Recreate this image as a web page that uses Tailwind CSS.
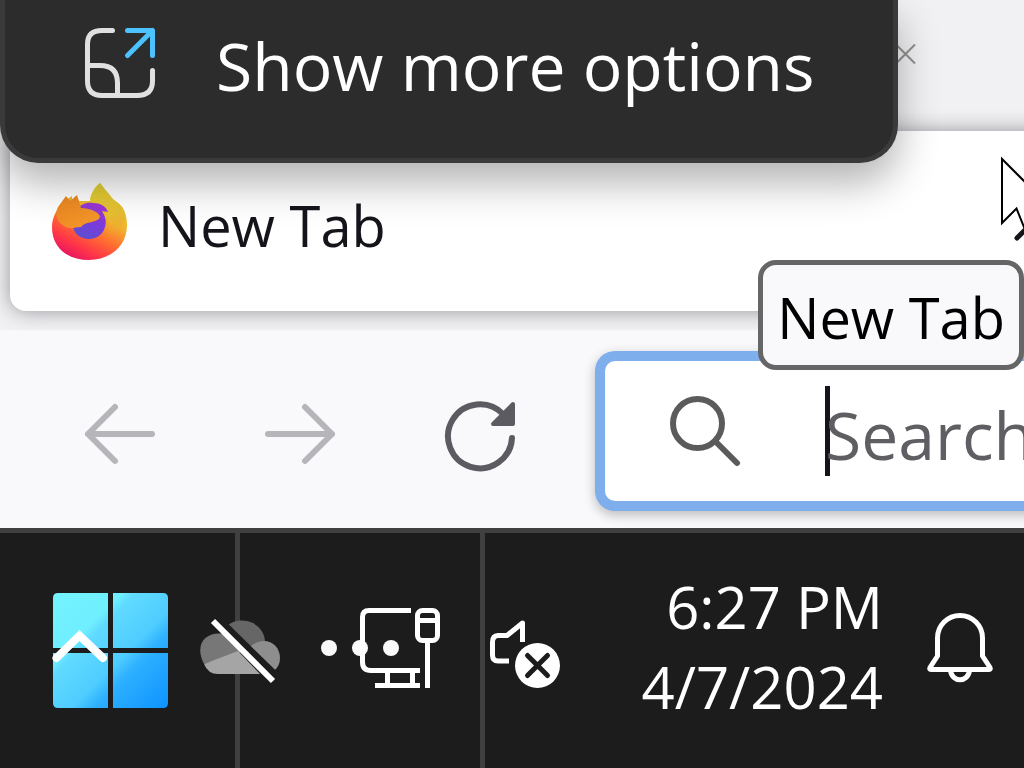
<!DOCTYPE html>
<html lang="en">
<head>
<meta charset="utf-8">
<title>New Tab</title>
<script src="https://cdn.jsdelivr.net/npm/@tailwindcss/browser@4"></script>
</head>
<body class="relative flex min-h-screen flex-col overflow-hidden bg-[#f9f9fb] font-['Open_Sans','Noto_Sans',sans-serif]">

<!-- Vertical tab list -->
<section class="relative flex h-[330px] flex-col bg-[#f1f1f3] pl-[10px]" aria-label="Tabs">
  <div class="flex h-[131px] items-start justify-end pt-[43px] pr-[108px]">
    <button aria-label="Close tab" class="h-[22px] w-[22px]">
      <svg viewBox="0 0 22 22" class="h-full w-full" fill="none" stroke="#8f8f8f" stroke-width="2"><path d="M2 1.500 21 20.500M21 1.500 2 20.500"/></svg>
    </button>
  </div>
  <button class="-mr-[40px] flex h-[180px] items-start gap-[28px] rounded-l-[16px] bg-white pt-[50px] pl-[40px] text-[#15141a] shadow-[0_0_20px_rgba(20,20,30,0.42)]">
    <svg viewBox="0 0 80 80" class="h-[80px] w-[80px]" aria-hidden="true">
      <defs>
        <linearGradient id="flame" x1=".78" y1=".1" x2=".3" y2="1"><stop offset="0" stop-color="#e5d32f"/><stop offset=".35" stop-color="#f0b32d"/><stop offset=".58" stop-color="#ff722f"/><stop offset=".82" stop-color="#ff3548"/><stop offset="1" stop-color="#e8155f"/></linearGradient>
        <linearGradient id="globe" x1=".8" y1="0" x2=".3" y2="1"><stop offset="0" stop-color="#a334d2"/><stop offset=".5" stop-color="#7c3bdc"/><stop offset="1" stop-color="#5b4fd0"/></linearGradient>
        <linearGradient id="fox" x1="0" y1="0" x2="1" y2="1"><stop offset="0" stop-color="#ea851f"/><stop offset="1" stop-color="#f59a2c"/></linearGradient>
        <linearGradient id="mane" x1=".3" y1="0" x2=".5" y2="1"><stop offset="0" stop-color="#e2d032"/><stop offset=".6" stop-color="#e6bf33"/><stop offset="1" stop-color="#f29a30" stop-opacity="0"/></linearGradient>
      </defs>
      <path fill="url(#flame)" d="M50 2c-6 5-9 11-10 18H29l-2-4-5 4 0-5-6 4c-8 7-14 16-14 27 0 22 17 33 37 33s38-13 38-35c0-10-3-17-8-21-4-3-7-5-9-9-3-3-6-7-10-12z"/>
      <path fill="url(#mane)" d="M50 2c-6 5-10 12-10 19 12 0 18 9 19 21 1 10-3 16-3 16 13-4 18-12 19-23 0-7-4-11-8-14-6-4-10-9-17-19z"/>
      <path fill="url(#globe)" d="M26 30c4-7 11-9 17-8 7 0 13 3 15 9l-6-1c3 5 5 10 3 16-2 8-9 12-16 12-10 0-17-7-16-16z"/>
      <path fill="url(#fox)" d="M8 26 16 15 20 20 27 14C29 20 30 24 31 27c8 0 19 4 19 9-1 3-5 4-8 5-6 1-8 2-11 5-8 0-10 4-20-3-5-5-6-11-3-17z"/>
    </svg>
    <span class="text-[56px] leading-[88px]">New Tab</span>
  </button>
</section>

<!-- Navigation toolbar -->
<nav class="flex h-[198px] items-center bg-[#f9f9fb] pl-[75px]" aria-label="Navigation">
  <div class="flex shrink-0 items-center gap-[90px] pt-[20px]">
    <button aria-label="Back" class="h-[90px] w-[90px]">
      <svg viewBox="0 0 90 90" class="h-full w-full" fill="none" stroke="#b6b6ba" stroke-width="6" stroke-linecap="round" stroke-linejoin="round"><path d="M40 13 13 40 40 67M13 40H77"/></svg>
    </button>
    <button aria-label="Forward" class="h-[90px] w-[90px]">
      <svg viewBox="0 0 90 90" class="h-full w-full" fill="none" stroke="#b6b6ba" stroke-width="6" stroke-linecap="round" stroke-linejoin="round"><path d="M50 13 77 40 50 67M13 40H77"/></svg>
    </button>
    <button aria-label="Reload" class="h-[90px] w-[90px]">
      <svg viewBox="0 0 90 90" class="h-full w-full"><path fill="none" stroke="#5b5b61" stroke-width="6" stroke-linecap="round" d="M77 44a32 32 0 1 1-9-24"/><path fill="#5b5b61" stroke="#5b5b61" stroke-width="4" stroke-linejoin="round" d="M78 10V30H58z"/></svg>
    </button>
  </div>
  <label class="mt-[4px] -mr-[40px] ml-[70px] flex h-[160px] min-w-0 flex-1 items-center overflow-hidden rounded-l-[20px] border-[10px] border-r-0 border-[#7eaeeb] bg-white pl-[55px] shadow-[0_4px_12px_rgba(0,0,0,0.25)]">
    <svg viewBox="0 0 90 90" class="h-[90px] w-[90px] shrink-0" fill="none" stroke="#5b5b5b" stroke-width="6" stroke-linecap="round" aria-hidden="true"><circle cx="37.500" cy="37.500" r="24.500"/><path d="M55 55 77 77"/></svg>
    <span class="ml-[75px] h-[90px] w-[5px] shrink-0 bg-[#15141a]"></span>
    <input aria-label="Search" placeholder="Search with Google or enter address" class="-ml-[5px] h-[90px] w-[360px] shrink-0 bg-transparent pt-[7px] text-[66px] text-[#5b5b66] placeholder-[#5f5f63] outline-none">
  </label>
</nav>

<!-- Taskbar -->
<footer class="relative flex min-h-[240px] flex-1 border-t-[5px] border-[#404040] bg-[#1c1c1c] text-white">
  <button aria-label="Start" class="flex w-[240px] items-start border-r-[5px] border-[#404040] pt-[60px] pl-[53px]">
    <svg viewBox="0 0 115 115" class="h-[115px] w-[115px]"><defs><linearGradient id="win" gradientUnits="userSpaceOnUse" x1="0" y1="0" x2="115" y2="115"><stop offset="0" stop-color="#74f3ff"/><stop offset=".3" stop-color="#6fefff"/><stop offset=".36" stop-color="#60daff"/><stop offset=".58" stop-color="#4fcdff"/><stop offset=".68" stop-color="#2db0ff"/><stop offset="1" stop-color="#0d93ff"/></linearGradient></defs><path fill="url(#win)" d="M5 0H55V55H0V5Q0 0 5 0zM60 0H110Q115 0 115 5V55H60zM0 60H55V115H5Q0 115 0 110zM60 60H115V110Q115 115 110 115H60z"/></svg>
  </button>
  <button aria-label="More" class="flex w-[245px] items-start border-r-[5px] border-[#404040] pt-[107px] pl-[81px]">
    <svg viewBox="0 0 80 16" class="h-[16px] w-[80px]" fill="#fafafa"><circle cx="8" cy="8" r="8"/><circle cx="39" cy="8" r="8"/><circle cx="70" cy="8" r="8"/></svg>
  </button>

  <!-- Notification area lies over the pinned buttons -->
  <div class="absolute inset-x-0 top-0 flex items-start pt-[34px] pr-[24px] pl-[40px]">
    <button aria-label="Show hidden icons" class="mt-[41px] h-[80px] w-[80px]">
      <svg viewBox="0 0 80 80" class="h-full w-full" fill="none" stroke="#fff" stroke-width="8" stroke-linecap="round"><path d="M16.500 50 39.500 27.500 63 50"/></svg>
    </button>
    <button aria-label="OneDrive, not signed in" class="ml-[80px] mt-[41px] h-[80px] w-[80px]">
      <svg viewBox="0 0 80 80" class="h-full w-full"><path fill="#666" d="M28 17A23 22 0 0 1 65 34L55 42 26 17z"/><path fill="#777" d="M4 56C-7 34 8 23 24 26L41 44z"/><path fill="#a5a5a5" d="M4 56 38 43 60 66H18Q8 66 4 56z"/><path fill="#8e8e8e" d="M51 38C65 27 80 36 80 50q0 8-6 13L50 40z"/><path stroke="#1c1c1c" stroke-width="6" d="M23 15 75 66"/><path stroke="#fff" stroke-width="6" d="M13 13 73 73"/></svg>
    </button>
    <button aria-label="Network" class="ml-[80px] mt-[41px] h-[80px] w-[80px]">
      <svg viewBox="0 0 80 80" class="h-full w-full" fill="none" stroke="#fff" stroke-width="5"><path d="M51 2.500H9Q2.500 2.500 2.500 9V54Q2.500 62.500 11 62.500H60M15 77.500H60M27.500 63V77M52.500 63V77"/><path d="M67.500 34V80"/><rect x="57.500" y="2.500" width="20" height="30" rx="5"/><path d="M58 12.500H77"/></svg>
    </button>
    <button aria-label="Volume muted" class="ml-[40px] mt-[41px] h-[80px] w-[90px]">
      <svg viewBox="0 0 90 80" class="h-full w-full" fill="none" stroke="#fff" stroke-width="5" stroke-linejoin="round"><path d="M42.500 34V15L27 27.500H18Q12.500 28 12.500 34V47Q12.500 53 18 53H29"/><circle cx="57.500" cy="57.500" r="22.500" fill="#fff" stroke="none"/><path stroke="#1c1c1c" stroke-linecap="round" d="M47.500 47.500 67.500 67.500M67.500 47.500 47.500 67.500"/></svg>
    </button>
    <button class="ml-auto text-right text-[58px] leading-[80px]"><time datetime="2024-04-07T18:27">6:27 PM<br>4/7/2024</time></button>
    <button aria-label="Notifications" class="ml-[37px] mt-[40px] h-[80px] w-[80px]">
      <svg viewBox="0 0 80 80" class="h-full w-full" fill="none" stroke="#fff" stroke-width="5" stroke-linejoin="round"><path d="M17.500 49V31a22.500 22.500 0 0 1 45 0V49l7.500 11.500Q71 62.500 69 62.500H11Q9 62.500 10 60.500zM30.500 63c1 13 18 13 19 0"/></svg>
    </button>
  </div>
</footer>

<!-- Context menu over the page -->
<div role="menu" class="absolute inset-x-0 top-0 mr-[126px] rounded-b-[38px] border-[5px] border-t-0 border-[#3a3a3a] bg-[#2c2c2c] shadow-[0_20px_40px_rgba(0,0,0,0.3)]">
  <button role="menuitem" class="flex h-[158px] w-full items-start gap-[56px] pt-[23px] pl-[75px] text-white">
    <svg viewBox="0 0 80 80" class="h-[80px] w-[80px] shrink-0" fill="none" stroke="#e0e0e0" stroke-width="5" stroke-linecap="round" stroke-linejoin="round"><path d="M32.500 7.500H22Q7.500 7.500 7.500 21V58Q7.500 72.500 22 72.500H57Q72.500 72.500 72.500 58V47.500M8 42.500H20Q37.500 42.500 37.500 60V72"/><path stroke="#4cc2ff" d="M47.500 7.500H72.500V32.500M72.500 7.500 47.500 32.500"/></svg>
    <span class="text-[66px] leading-[84px] whitespace-nowrap">Show more options</span>
  </button>
</div>

<!-- Tooltip and pointer -->
<div role="tooltip" class="absolute top-[260px] right-0 rounded-[18px] border-[5px] border-[#666] bg-[#f9f9fb] px-[14px] pt-[8px] pb-[4px] text-[56px] leading-[88px] whitespace-nowrap text-black">New Tab</div>
<svg viewBox="0 0 24 88" class="absolute top-[156px] right-0 h-[88px] w-[24px]" aria-hidden="true"><path fill="#fff" stroke="#000" stroke-width="2" d="M2 3V67L16.500 52.500 26 76V27z"/><path fill="none" stroke="#15141a" stroke-width="5" stroke-linecap="round" d="M17 82 27 72"/></svg>
</body>
</html>
